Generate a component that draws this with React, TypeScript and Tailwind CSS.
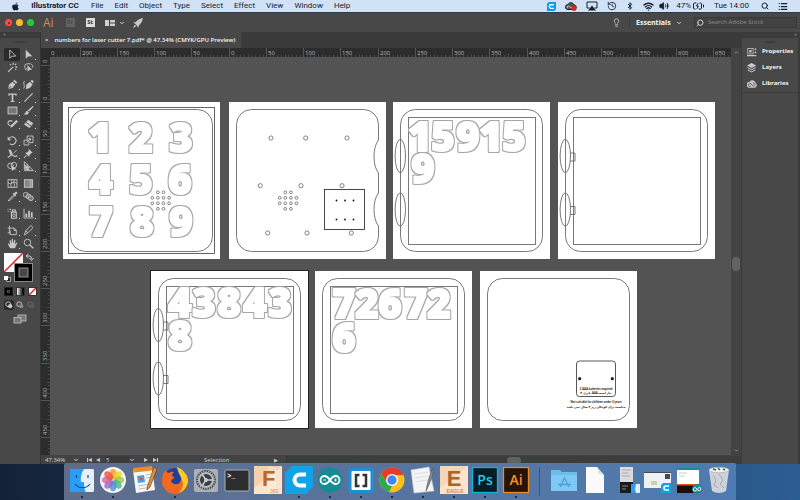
import React from "react";
import {
  Bluetooth,
  ChevronDown,
  History,
  Lightbulb,
  List,
  Search,
  Volume2,
  Wifi,
  Airplay,
  BatteryCharging,
} from "lucide-react";
import { FaApple } from "react-icons/fa";

type Glyph = { char: string; x: number; y: number };
type Point = [number, number];

const LINE = "#6a6a6a";

/* ---------- Artboard parts ---------- */

function Digits({ items }: { items: Glyph[] }) {
  return (
    <g fill="#ffffff" stroke="#ffffff" strokeWidth="2" strokeLinejoin="round" fontFamily="'Open Sans', sans-serif" fontWeight="800" fontSize="40" textAnchor="middle">
      {items.map((g, i) => (
        <text key={i} x={g.x} y={g.y - 1} filter="url(#cut-line)">
          {g.char}
        </text>
      ))}
    </g>
  );
}

/* Hairline contour drawn round a white shape */
function CutLineFilter() {
  return (
    <svg className="absolute h-0 w-0" aria-hidden="true">
      <filter id="cut-line" x="-20%" y="-20%" width="140%" height="140%" colorInterpolationFilters="sRGB">
        <feMorphology in="SourceAlpha" operator="dilate" radius="1" result="fat" />
        <feFlood floodColor="#a6a6a6" />
        <feComposite in2="fat" operator="in" result="edge" />
        <feMerge>
          <feMergeNode in="edge" />
          <feMergeNode in="SourceGraphic" />
        </feMerge>
      </filter>
    </svg>
  );
}

function Holes({ points, r }: { points: Point[]; r: number }) {
  return (
    <g fill="none" stroke="#666666" strokeWidth="0.8">
      {points.map(([x, y], i) => (
        <circle key={i} cx={x} cy={y} r={r} />
      ))}
    </g>
  );
}

function speaker(x0: number): Point[] {
  const xs = [x0, x0 + 5.6, x0 + 11.2, x0 + 16.8];
  return [
    [xs[1], 90.3],
    [xs[2], 90.3],
    ...xs.map((x): Point => [x, 95.8]),
    ...xs.map((x): Point => [x, 101.3]),
    [xs[1], 106.8],
    [xs[2], 106.8],
  ];
}

const Outline = () => <rect x="7.5" y="7.5" width="142" height="142" rx="15" fill="none" stroke={LINE} strokeWidth="0.9" />;
const Inner = () => <rect x="15.5" y="15.5" width="127" height="127" fill="none" stroke={LINE} strokeWidth="0.9" />;

function Hinges({ tabs = false }: { tabs?: boolean }) {
  return (
    <g fill="none" stroke={LINE} strokeWidth="0.9">
      <ellipse cx="7.3" cy="54" rx="5.2" ry="16.7" />
      <ellipse cx="7.3" cy="107.5" rx="5.2" ry="16.7" />
      {tabs && <path d="M12.3 51H17v8h-4.7M12.3 104.500H17v8h-4.700" />}
    </g>
  );
}

function row(chars: string, xs: number[], y: number): Glyph[] {
  return chars.split("").map((char, i) => ({ char, x: xs[i], y }));
}

function Artboard({ place, active, children }: { place: string; active?: boolean; children: React.ReactNode }) {
  return (
    <svg viewBox="0 0 157 157" className={`absolute h-[157px] w-[157px] bg-white ${active ? "outline outline-1 outline-[#222]" : ""} ${place}`}>
      {children}
    </svg>
  );
}

function Artboards() {
  return (
    <>
      <CutLineFilter />
      <Artboard place="left-[13px] top-[45px]">
        <rect x="5.500" y="5.500" width="146" height="146" fill="none" stroke="#555" strokeWidth="0.9" />
        <Outline />
        <Digits items={[...row("123", [37, 78, 118], 51), ...row("456", [38, 78, 117], 93), ...row("789", [38, 79, 118], 135)]} />
        <Holes points={speaker(89.3)} r={1.4} />
      </Artboard>
      <Artboard place="left-[179px] top-[45px]">
        <path
          d="M22.500 7.500h112a15 15 0 0 1 15 15V38c-6 7-6 26 0 33v20c-6 7-6 26 0 33v10.500a15 15 0 0 1-15 15h-112a15 15 0 0 1-15-15v-112a15 15 0 0 1 15-15z"
          fill="none"
          stroke={LINE}
          strokeWidth="0.9"
        />
        <Holes
          r={2.1}
          points={[[42, 36], [76.7, 36], [118, 36], [31.3, 83.7], [72, 83.7], [113, 83.7], [38.7, 131], [78, 131], [122.3, 131]]}
        />
        <Holes points={speaker(50.7)} r={1.4} />
        <rect x="95.500" y="87.500" width="40" height="40" fill="#fff" stroke="#333" strokeWidth="0.9" />
        {[98.5, 117.5].map((y) => [107.5, 116, 124.5].map((x) => <circle key={`${x}-${y}`} cx={x} cy={y} r="0.9" fill="#111" />))}
      </Artboard>
      <Artboard place="left-[343px] top-[45px]">
        <Outline />
        <Inner />
        <Hinges />
        <Digits items={[...row("15915", [27, 50, 75, 98, 121], 50), { char: "9", x: 30, y: 82 }]} />
      </Artboard>
      <Artboard place="left-[508px] top-[45px]">
        <Outline />
        <Inner />
        <Hinges tabs />
      </Artboard>
      <Artboard place="left-[101px] top-[214px]" active>
        <Outline />
        <Inner />
        <Hinges tabs />
        <Digits items={[...row("43843", [29, 53, 78, 104, 129], 47), { char: "8", x: 29, y: 80 }]} />
      </Artboard>
      <Artboard place="left-[265px] top-[214px]">
        <Outline />
        <Inner />
        <Digits items={[...row("72672", [29, 52, 75, 101, 124], 48), { char: "6", x: 29, y: 82 }]} />
      </Artboard>
      <Artboard place="left-[430px] top-[214px]">
        <Outline />
        <rect x="96.500" y="90" width="39" height="35.500" rx="3" fill="none" stroke="#444" strokeWidth="0.9" />
        <circle cx="99.700" cy="107.700" r="1.600" fill="#222" />
        <circle cx="132.300" cy="107.700" r="1.600" fill="#222" />
        <g fill="#111" fontFamily="Lato, 'DejaVu Sans', sans-serif" fontWeight="700" textAnchor="middle" fontSize="3">
          <text x="116" y="118.500">3 AAA batteries required</text>
          <text x="116" y="122.500">۳ باتری AAA نیاز است</text>
          <text x="116" y="132">Not suitable for children under 3 years</text>
          <text x="116" y="137">مناسب برای کودکان زیر ۳ سال نمی باشد</text>
        </g>
      </Artboard>
    </>
  );
}

/* ---------- Rulers ---------- */

const TOP_LABELS = ["250", "200", "150", "100", "50", "0", "50", "100", "150", "200", "250", "300", "350", "400", "450", "500", "550", "600", "650"];
const SIDE_LABELS = ["0", "0", "50", "100", "150", "200", "250", "300", "350", "400", "450"];
const STEP = 37.25;

function TopRuler() {
  return (
    <svg className="h-[9px] min-w-0 flex-1 bg-[#2c2c2c]" fontFamily="'Open Sans', sans-serif" fontSize="6" fill="#b5b5b5" stroke="none">
      {TOP_LABELS.map((t, i) => {
        const x = Math.round(29.5 + (i - 1) * STEP);
        return (
          <g key={i}>
            <rect x={x} y="0" width="1" height="9" fill="#555" />
            {[1, 2, 3, 4, 5, 6, 7, 8, 9].map((n) => (
              <rect key={n} x={Math.round(x + n * 3.725)} y={n === 5 ? 6 : 7} width="1" height="3" fill="#484848" />
            ))}
            <text x={i === 0 ? 1 : x + 2} y="6.500">
              {i === 0 ? "0" : t}
            </text>
          </g>
        );
      })}
    </svg>
  );
}

function SideRuler() {
  return (
    <svg className="h-full w-[9px] shrink-0 bg-[#2c2c2c]" fontFamily="'Open Sans', sans-serif" fontSize="6" fill="#b5b5b5">
      {SIDE_LABELS.map((t, i) => {
        const y = Math.round(7.5 + i * STEP);
        return (
          <g key={i}>
            <rect x="0" y={y} width="9" height="1" fill="#555" />
            {[1, 2, 3, 4, 5, 6, 7, 8, 9].map((n) => (
              <rect key={n} x={n === 5 ? 6 : 7} y={Math.round(y + n * 3.725)} width="3" height="1" fill="#484848" />
            ))}
            <text transform={`translate(6 ${y - 2}) rotate(-90)`}>{t}</text>
          </g>
        );
      })}
    </svg>
  );
}

/* ---------- Tool icons, each on a 16 unit grid ---------- */

const F = { fill: "#c8c8c8", stroke: "none" };
const TOOL_GROUPS: [string, React.ReactNode][][] = [
  [
    ["Selection", <path d="M4 1.500v12l3.200-3 5.500-.2z" />],
    ["Direct selection", <path {...F} d="M4 1v13l3.500-3.200 6-.3z" />],
    ["Magic wand", <path d="M1.500 14.500 9 7M9 1v3M13.500 2.500l-2 2M12 7.500h3M4.500 3l1.500 1.500M13.500 11.500l-1.500-1.500" strokeWidth="1.600" />],
    ["Lasso", <><path d="M5 9.500C1 9 1 3 7 2.500s9 3 6 6M5 9.500c-2 0-2 2.500 0 2.500" /><path {...F} d="M6.500 4.500V14l2.500-2.500h4z" /></>],
  ],
  [
    ["Pen", <><path {...F} d="M1.500 15 3 8l5-4 4 4-4 5zM9 3l2-2 4 4-2 2z" /><path d="m2 14.500 4-4" stroke="#444" /></>],
    ["Curvature", <><path {...F} d="M4 15l1-7 5-4 4 4-4 5zM11 3l2-2 3 3-2 2z" /><path d="M1 14C4 9-1 7 2 3" /></>],
    ["Type", <path {...F} d="M2 2h12v3.500h-1.500L12 4H9.200v9l1.800.5V14.500H5v-1l1.800-.5V4H4l-.5 1.500H2z" />],
    ["Line segment", <path d="M2 14 14 2" strokeWidth="1.500" />],
    ["Rectangle", <rect x="1.500" y="3" width="13" height="10" fill="#777" />],
    ["Paintbrush", <path {...F} d="M14.500 1 7 7.500l2 2L15.500 2zM6.500 8.500c-3 0-2 4-5.500 5 4 1.500 7.500 0 7.500-3z" />],
    ["Shaper", <><path d="M8 5C4 2 0 6 2 9s5 3 6 0" strokeWidth="1.500" /><path {...F} d="M13.500 3 6 10.500 5 14l3.500-1.500L16 5z" /></>],
    ["Eraser", <><path {...F} d="m1.500 9.500 6-7L15 7.500 9.500 14.500z" /><path d="m4.500 6.500 7 5" stroke="#444" /></>],
  ],
  [
    ["Rotate", <><path d="M3.500 4.500A5.500 5.500 0 1 1 4 12.500" strokeWidth="1.500" /><path {...F} d="M1 2v5.500h5z" /></>],
    ["Scale", <><path d="M1.500 7.500h7v7h-7zM6 7V1.500h8.500V11H9" /><path d="m5 11 6-6M8 5h3v3" /></>],
    ["Width", <><path d="M1 13c4 1 3-4 6-3s4 4 8 1" strokeWidth="1.800" /><path {...F} d="M2 2l4 1 2 6-3 1z" /><path d="m9 8 5-5" /></>],
    ["Free transform", <><path {...F} d="m8 1 6 6-2 .5L9.500 10l-.5 3L3 7l3-.5L8.500 4z" /><path d="M5 10.500 1.500 14.500" strokeWidth="1.500" /></>],
    ["Shape builder", <><circle cx="5" cy="7" r="4" /><circle cx="10" cy="6" r="4" /><path {...F} d="M7 7v8l2.500-2.500H14z" /></>],
    ["Perspective grid", <><path d="M2 1v13h13zM2 5l8 9M2 9h8M6 4v10" /><path {...F} d="M3 6l6 2v5H3z" opacity=".7" /></>],
  ],
  [
    ["Mesh", <><rect x="1.500" y="2.500" width="13" height="11" /><path d="M1.500 7c5 4 7-4 13 1M6 2.500c4 4-3 7 1 11M11 2.500c-3 4 2 7-1 11" /></>],
    ["Gradient", <><rect x="2" y="2.500" width="12" height="11" fill="#888" /><path {...F} d="M9 3h5v10H9z" opacity=".4" /></>],
    ["Eyedropper", <><path d="M10 5.500 3.500 12l-1.500 2.500 2.500-1L11 7" /><path {...F} d="m8 4 1.500-1 1 .5C12 .5 15 .500 15 2.500c0 1-1.500 2-2.500 3l.5 1.500-1 1z" /></>],
    ["Blend", <><rect x="1" y="2.500" width="6" height="6" rx="1" /><circle cx="8" cy="8" r="3.500" fill="#888" /><circle cx="11.500" cy="10.500" r="3.500" fill="#777" /></>],
  ],
  [
    ["Symbol sprayer", <><path d="M6.500 6h7v9h-7zM8 6V3h4v3M1 2h1M4 2h2M1 5h1M4 5h1" strokeWidth="1.600" /><circle cx="10" cy="10.500" r="2" /></>],
    ["Column graph", <><path d="M1.500 1v13.500h14" /><path {...F} d="M3.500 8H6v5H3.500zM7.500 4H10v9H7.500zM11.500 6H14v7h-2.500z" /></>],
  ],
  [
    ["Artboard", <path d="M3.500 1v10.500M1 4.500h9.500l3 3v6.500h-9V8M1 11.500h4M10.500 4.500V8h3" />],
    ["Slice", <path d="m2 14.500 2-6 6-6.500c3-2 5 1 3 3.500l-6 6zM4 8.500l3 3" />],
    ["Hand", <path {...F} d="M4.500 15 1 8.500l1.300-.8L4.500 10 3.500 3.500 5 3l1.500 5L7 1h1.600l.4 7 1.800-5.500 1.500.4-.8 6.600 2.200-3 1.300.7L11.500 15z" />],
    ["Zoom", <><circle cx="6.500" cy="6.500" r="4.700" /><path d="m10 10 5 5" strokeWidth="2" /></>],
  ],
];

function ToolButton({ name, icon }: { name: string; icon: React.ReactNode }) {
  const active = name === "Selection";
  return (
    <button type="button" aria-label={name} title={name} className={`relative flex h-[13px] w-4 items-center justify-center rounded-xs ${active ? "bg-[#2b2b2b]" : ""}`}>
      <svg viewBox="0 0 16 16" className="h-[11px] w-[11px]" fill="none" stroke="#c8c8c8" strokeWidth="1.300">
        {icon}
      </svg>
      {!["Selection", "Magic wand", "Lasso", "Mesh", "Gradient", "Zoom", "Curvature"].includes(name) && (
        <span className="absolute right-0 bottom-px h-px w-px bg-neutral-300" />
      )}
    </button>
  );
}

function ToolPanel() {
  return (
    <aside className="flex w-10 shrink-0 flex-col bg-[#484848]">
      <div className="h-[6px] bg-[#3a3a3a] pl-[3px] text-[6px] leading-[5px] text-neutral-400">«</div>
      <div className="mx-auto mt-[3px] h-[2px] w-[10px] bg-[#3c3c3c]" />
      <div className="mt-[5px] flex flex-col gap-1 pl-1">
        {TOOL_GROUPS.map((g, i) => (
          <div key={i} className="grid w-8 grid-cols-2">
            {g.map(([name, icon]) => (
              <ToolButton key={name} name={name} icon={icon} />
            ))}
          </div>
        ))}
      </div>
      <svg viewBox="0 0 32 32" className="mt-[3px] ml-1 h-8 w-8" aria-label="Fill and stroke">
        <rect x="0" y="0" width="19" height="19" fill="#fff" />
        <path d="M0 19 19 0" stroke="#e3242b" strokeWidth="1.500" />
        <rect x="10.500" y="10.500" width="18" height="18" fill="#000" stroke="#888" />
        <rect x="15" y="15" width="9" height="9" fill="#484848" stroke="#aaa" strokeWidth="0.800" />
        <path d="M23 3h2.500q2 0 2 3M24.500 1 22 3l2.500 2M25.500 5l2 2.500 2-2.500" fill="none" stroke="#c8c8c8" />
        <path d="M2.500 24.500h4v4h-4z" fill="#222" stroke="#bbb" strokeWidth=".8" />
        <path d="M0 23h4v4H0z" fill="#fff" />
      </svg>
      <div className="mt-[2px] flex gap-[3px] pl-1">
        <button type="button" aria-label="Color" className="flex h-[9px] w-[9px] items-center justify-center border border-[#222] bg-black">
          <span className="h-[3px] w-[3px] border border-neutral-600" />
        </button>
        <button type="button" aria-label="Gradient fill" className="h-[9px] w-[9px] border border-[#333] bg-linear-to-r from-white to-black" />
        <button type="button" aria-label="No fill" className="h-[9px] w-[9px] border border-[#333] bg-white">
          <svg viewBox="0 0 7 7" className="h-[7px] w-[7px]">
            <path d="M0 7 7 0" stroke="#e3242b" strokeWidth="1.500" />
          </svg>
        </button>
      </div>
      <div className="mt-1 flex gap-px pl-1">
        {["Draw normal", "Draw behind", "Draw inside"].map((n, i) => (
          <button key={n} type="button" aria-label={n} className={`flex h-[10px] w-[10px] items-center justify-center rounded-xs ${i === 0 ? "bg-[#2b2b2b]" : ""} ${i === 2 ? "opacity-30" : ""}`}>
            <svg viewBox="0 0 10 10" className="h-2 w-2">
              <circle cx="4" cy="4" r="3" fill="none" stroke="#c8c8c8" strokeWidth="1.200" />
              <circle cx="6.500" cy="6.500" r="2.700" fill={i === 0 ? "#c8c8c8" : "#888"} />
            </svg>
          </button>
        ))}
      </div>
      <button type="button" aria-label="Screen mode" className="mt-1 ml-[13px] h-[10px] w-[14px]">
        <svg viewBox="0 0 14 10" className="h-[10px] w-[14px]" fill="#777" stroke="#bbb" strokeWidth=".9">
          <rect x="5" y="1" width="8" height="6" />
          <rect x="1" y="3.500" width="7" height="5.500" />
        </svg>
      </button>
    </aside>
  );
}

/* ---------- Bars ---------- */

function MenuBar() {
  return (
    <header className="flex h-[13px] shrink-0 items-center border-b border-[#2d3a4e] bg-[#d2e2f6] font-['Roboto',sans-serif] text-[8px] leading-[12px] text-[#16202e]">
      <FaApple className="mr-[10px] ml-[11px] h-[9px] w-[9px]" />
      <nav className="flex gap-[11px]">
        <button type="button" className="w-[50px] whitespace-nowrap font-bold">Illustrator CC</button>
        {["File", "Edit", "Object", "Type", "Select", "Effect", "View", "Window", "Help"].map((m) => (
          <button type="button" key={m}>{m}</button>
        ))}
      </nav>
      <div className="ml-auto flex items-center gap-[9px] pr-3">
        <svg viewBox="0 0 10 10" className="h-[9px] w-[9px]">
          <path d="M2 0h8v8L8 10H0V2z" fill="#0b9be8" />
          <path d="M7.500 3H4.500a2 2 0 0 0 0 4h3" fill="none" stroke="#fff" strokeWidth="1.500" />
        </svg>
        <svg viewBox="0 0 12 9" className="h-[9px] w-3">
          <path d="M3 7.500a2.500 2.500 0 0 1 0-5c1-2.500 5-2.500 6 .5 3 0 3 4.500 0 4.500z" fill="#555" stroke="#222" />
          <path d="M3 6a1 1 0 0 1 0-2c2 0 2 2 4 2" fill="none" stroke="#ddd" strokeWidth=".8" />
          <circle cx="9" cy="6.500" r="2.500" fill="#e2231a" />
        </svg>
        <svg viewBox="0 0 12 10" className="h-[10px] w-3">
          <path d="M3.500 7H1V1h10v6H8.500" fill="none" stroke="#16202e" />
          <path d="m6 4.500 4 5H2z" fill="#16202e" />
        </svg>
        <History className="h-[10px] w-[10px]" />
        <Bluetooth className="h-[10px] w-2" strokeWidth={3} />
        <Wifi className="h-[11px] w-[11px]" strokeWidth={3} />
        <Volume2 className="-ml-1 h-[10px] w-[10px]" fill="#16202e" />
        <div className="-ml-[2px] flex items-center gap-px">
          <span>47%</span>
          <BatteryCharging className="h-3 w-[13px]" />
        </div>
        <span className="whitespace-nowrap">Tue 14:00</span>
        <Search className="ml-[3px] h-2 w-2" strokeWidth={3} />
        <List className="h-[11px] w-[10px]" strokeWidth={3} />
      </div>
    </header>
  );
}

function AppBar() {
  return (
    <div className="flex h-[19px] shrink-0 items-center bg-[#484848] pr-[3px] pl-[5px]">
      <div className="flex gap-1">
        <button type="button" aria-label="Close" className="flex h-[7px] w-[7px] items-center justify-center rounded-full bg-[#fc4b48]">
          <span className="h-[2px] w-[2px] rounded-full bg-[#7a1010]" />
        </button>
        <button type="button" aria-label="Minimise" className="h-[7px] w-[7px] rounded-full bg-[#fdbc2e]" />
        <button type="button" aria-label="Full screen" className="h-[7px] w-[7px] rounded-full bg-[#28c840]" />
      </div>
      <span className="ml-[9px] text-[12px] leading-4 text-[#c98a5e]">Ai</span>
      <button type="button" className="ml-3 h-[9px] w-[9px] bg-[#636363] text-[6px] leading-[9px] text-[#444]">Br</button>
      <button type="button" className="ml-[11px] h-[9px] w-[9px] bg-[#dcdcdc] text-[6px] leading-[9px] font-bold text-[#333]">St</button>
      <button type="button" aria-label="Arrange documents" className="ml-[10px] flex items-center gap-1">
        <svg viewBox="0 0 10 8" className="h-2 w-[10px]" fill="#d0d0d0">
          <path d="M0 1h4v6H0zM5 1h5v2.500H5zM5 4.500h5V7H5z" />
        </svg>
        <ChevronDown className="h-[6px] w-[6px] text-neutral-300" strokeWidth={4} />
      </button>
      <button type="button" aria-label="GPU performance" className="ml-2">
        <svg viewBox="0 0 12 12" className="h-[10px] w-[10px]" fill="#c8c8c8">
          <path d="M12 0C7 1 5 3 3 5L0 5.500 2.500 7 5 9.500 6.500 12 7 9c2-2 4-4 5-9zM2 8l-2 4 4-2z" />
        </svg>
      </button>
      <Lightbulb className="ml-auto h-[9px] w-[9px] text-neutral-300" />
      <div className="ml-2 flex items-center border-l border-[#3d3d3d] pl-[6px]">
        <select aria-label="Workspace" className="w-10 appearance-none bg-transparent text-[7px] leading-3 font-bold text-neutral-100">
          <option>Essentials</option>
        </select>
        <ChevronDown className="h-[6px] w-[6px] text-neutral-300" strokeWidth={4} />
      </div>
      <div className="ml-3 flex h-[11px] w-[103px] items-center border border-[#393939] bg-[#424242] pl-px">
        <Search className="h-2 w-2 -scale-x-100 text-neutral-300" strokeWidth={3} />
        <input aria-label="Search Adobe Stock" placeholder="Search Adobe Stock" className="ml-1 w-[84px] min-w-0 bg-transparent text-[6px] leading-[9px] text-neutral-300 placeholder:text-[#8c8c8c]" />
      </div>
    </div>
  );
}

function RightPanel() {
  const items: [string, React.ReactNode][] = [
    ["Properties", <><rect x="1" y="2" width="7" height="7" fill="none" stroke="#c8c8c8" /><path d="M3 4h3v3H3zM10 2h2v2h-2zM10 6h2v2h-2zM0 10.500h12V12H0z" /></>],
    ["Layers", <path d="m6 0 6 3.200-6 3.200L0 3.200zM1.500 5.500 6 8l4.500-2.500L12 6.300 6 9.500 0 6.300zM1.500 8.500 6 11l4.500-2.500.8 1L6 12.500.700 9.500z" />],
    ["Libraries", <><path d="M3.500 11.500a4 4 0 0 1 0-8c2-3 7-2 7.500 1.500a3.500 3.500 0 0 1-1 6.500z" /><path d="M5 9a2 2 0 1 1 0-3l2.500 3a2 2 0 1 0 0-3.500" fill="none" stroke="#444" /></>],
  ];
  return (
    <aside className="flex w-[59px] shrink-0 flex-col border-r-2 border-l border-[#3a3a3a] bg-[#484848]">
      <div className="h-[6px] bg-[#3a3a3a] pr-px text-right text-[6px] leading-[5px] text-neutral-400">«</div>
      <div className="mx-auto mt-[3px] h-[2px] w-[10px] bg-[#3c3c3c]" />
      <div className="flex flex-col gap-[3px] border-b border-[#3a3a3a] py-[2px] pl-[5px]">
        {items.map(([name, icon]) => (
          <button key={name} type="button" className="flex h-[13px] items-center gap-[5px] text-[6px] font-bold text-neutral-100">
            <svg viewBox="0 0 13 13" className="h-[10px] w-[10px] shrink-0" fill="#c8c8c8">{icon}</svg>
            {name}
          </button>
        ))}
      </div>
    </aside>
  );
}

function Document() {
  return (
    <main className="flex min-w-0 flex-1 flex-col border-l border-[#333] bg-[#3a3a3a]">
      <div className="flex h-4 shrink-0">
        <div className="flex h-full w-[200px] items-center gap-[6px] bg-[#484848] pl-1 text-[6px] text-neutral-100">
          <button type="button" aria-label="Close document">×</button>
          <span className="font-semibold whitespace-nowrap">numbers for laser cutter 7.pdf* @ 47.34% (CMYK/GPU Preview)</span>
        </div>
      </div>
      <div className="flex min-h-0 flex-1">
        <div className="flex min-w-0 flex-1 flex-col">
          <div className="flex shrink-0">
            <div className="h-[9px] w-[9px] bg-[#2c2c2c]" />
            <TopRuler />
          </div>
          <div className="flex min-h-0 flex-1">
            <SideRuler />
            <div className="relative min-w-0 flex-1 overflow-hidden bg-[#535353]">
              <Artboards />
            </div>
          </div>
        </div>
        <div className="flex w-[10px] shrink-0 flex-col items-center bg-[#434343] py-[2px]">
          <ChevronDown className="h-[5px] w-[5px] rotate-180 text-neutral-400" strokeWidth={4} />
          <div className="h-1/2" />
          <div className="h-[14px] w-2 rounded-full bg-[#626262]" />
          <div className="flex-1" />
          <ChevronDown className="h-[5px] w-[5px] text-neutral-400" strokeWidth={4} />
        </div>
      </div>
      <div className="flex h-[9px] shrink-0 items-center bg-[#434343] pt-px text-[6px] leading-[8px] text-neutral-300">
        <select aria-label="Zoom level" className="ml-1 w-[28px] appearance-none leading-[8px]">
          <option>47.34%</option>
        </select>
        <ChevronDown className="h-[6px] w-[6px]" strokeWidth={4} />
        <svg viewBox="0 0 14 6" className="ml-2 h-[6px] w-[14px]" fill="#c8c8c8"><path d="M0 1h1v4H0zM5 1v4L1 3zM13 1v4L9 3z" /></svg>
        <select aria-label="Artboard" className="ml-1 w-6 appearance-none bg-[#3a3a3a] pl-px leading-[8px]" defaultValue="5">
          <option>5</option>
        </select>
        <ChevronDown className="h-[6px] w-[6px]" strokeWidth={4} />
        <svg viewBox="0 0 14 6" className="ml-[9px] h-[6px] w-[14px]" fill="#c8c8c8"><path d="M0 1v4l4-2zM9 1v4l4-2zM13 1h1v4h-1z" /></svg>
        <span className="ml-[46px] w-[70px]">Selection</span>
        <span className="text-[5px]">▶</span>
        <div className="ml-2 flex h-full flex-1 items-center justify-center border-l border-[#333] bg-[#3d3d3d]">
          <div className="h-[7px] w-[14px] rounded-full bg-[#626262]" />
        </div>
      </div>
    </main>
  );
}

/* ---------- Dock ---------- */

const APPS: { name: string; running: boolean; icon: React.ReactNode }[] = [
  {
    name: "Finder", running: true,
    icon: <><rect x="2" y="3" width="24" height="23" rx="1.500" fill="#e4f0fb" /><path d="M2 3h14c-3 4-3.500 9-3 13h3c0 4 .5 7 1.500 10H2z" fill="#2b9df4" /><path d="M7 18c4 5 11 5 15 0M8.500 9v3M20 9v3" fill="none" stroke="#164a7a" strokeWidth="1.200" /></>,
  },
  {
    name: "Photos", running: true,
    icon: <><circle cx="14" cy="14" r="13" fill="#f5f5f5" />{["#f79a1e", "#f5cf22", "#9ccb3c", "#45b98c", "#4a90d9", "#9169c4", "#d763a5", "#ee4f45"].map((c, i) => <ellipse key={c} cx="14" cy="8" rx="3.600" ry="5.300" fill={c} opacity=".8" transform={`rotate(${i * 45} 14 14)`} />)}</>,
  },
  {
    name: "Pages", running: false,
    icon: <><path d="m3 4 19-2 3 22-19 3z" fill="#f6f6f4" /><path d="m3 2 19-2 .7 4.500L3.500 6.500z" fill="#f08a24" /><path d="m7 10 7-1 1 7-7 1z" fill="#4aa3e0" /><path d="m9 12 3-1 1 2-2 2z" fill="#e4572e" /><path d="m16 9 5-1M16 12l5-1M8 20l12-2M9 23l10-1.500" stroke="#bbb" /><path d="M24 1 27 3 20 21l-3 3 .5-4z" fill="#e39132" stroke="#5b371a" strokeWidth=".6" /></>,
  },
  {
    name: "Firefox", running: true,
    icon: <><circle cx="14" cy="14" r="12" fill="#21409a" /><path d="M2 8c1-2 2-3 3-4 0 2 1 3 3 3 2-2 4-1 5-1-2 2-3 4 0 5 1 1-2 2-3 4 2 5 9 4 10-1 1-4-2-8-4-12 5 2 11 7 11 13a13 13 0 0 1-26 0c0-3 1-5 1-7z" fill="#f5681f" /><path d="M16 1c7 3 11 8 11 14-1 7-5 10-9 12 4-5 5-9 3-13-1-4-4-7-5-13z" fill="#ffc928" /></>,
  },
  {
    name: "System Preferences", running: false,
    icon: <><rect x="2" y="3" width="24" height="23" rx="2" fill="#aab0b6" /><circle cx="14" cy="14" r="10" fill="#3b3f44" /><circle cx="14" cy="14" r="7" fill="none" stroke="#b9bdc2" strokeWidth="2" /><circle cx="14" cy="14" r="8.800" fill="none" stroke="#b9bdc2" strokeWidth="1.500" strokeDasharray="1.200 1.200" /><path d="M14 14h7M14 14l-4-6M14 14l-4 6" stroke="#c9cdd1" strokeWidth="1.500" /><circle cx="14" cy="14" r="2" fill="#c9cdd1" /></>,
  },
  {
    name: "Terminal", running: false,
    icon: <><rect x="2" y="4" width="24" height="21" rx="1" fill="#2c2d2f" stroke="#a9adb3" /><text x="4" y="11.500" fontSize="7" fontWeight="700" fill="#fff" fontFamily="'Liberation Mono', monospace">&gt;_</text></>,
  },
  {
    name: "Fusion 360", running: false,
    icon: <><rect x="0" y="0" width="28" height="28" fill="#fbe3cc" /><path d="M0 0h28L0 22z" fill="#f3c296" opacity=".6" /><path d="M14 1h8v26h-8z" fill="#fff" opacity=".25" /><text x="8" y="20" fontSize="22" fontWeight="700" fill="#b8692a" fontFamily="'Liberation Sans', sans-serif">F</text><text x="16" y="26.500" fontSize="5" fill="#d4893f" fontFamily="'Liberation Sans', sans-serif">360</text></>,
  },
  {
    name: "Cura", running: true,
    icon: <><path d="M7 0h21v21l-7 7H0V7z" fill="#10a3e8" /><path d="M21 8.500h-6a5.500 5.500 0 0 0 0 11h6" fill="none" stroke="#fff" strokeWidth="4" /></>,
  },
  {
    name: "Arduino", running: true,
    icon: <><circle cx="14" cy="14" r="12.500" fill="#138c93" /><path d="M14 14c-2-3-3.500-4-5.500-4a4 4 0 0 0 0 8c2 0 3.500-1 5.500-4s3.500-4 5.500-4a4 4 0 0 1 0 8c-2 0-3.500-1-5.500-4z" fill="none" stroke="#fff" strokeWidth="1.800" /><path d="M7 14h3M18 14h3M19.500 12.500v3" stroke="#fff" strokeWidth=".9" /></>,
  },
  {
    name: "Brackets", running: true,
    icon: <><rect x="1.500" y="2" width="25" height="25" rx="3" fill="#1c8fd6" /><rect x="4.500" y="5" width="19" height="19" rx="1" fill="#fff" /><path d="M12.500 9H9v11h3.500M15.500 9H19v11h-3.500" fill="none" stroke="#333" strokeWidth="2.500" /></>,
  },
  {
    name: "Chrome", running: true,
    icon: <><circle cx="14" cy="14" r="12.500" fill="#fbc116" /><path d="M3.200 7.700A12.500 12.500 0 0 1 25.500 9H14l-5 8z" fill="#e33b2e" /><path d="M3.200 7.700 9 17.500l5 2.500-3 6.100A12.500 12.500 0 0 1 3.200 7.700z" fill="#2da94f" /><circle cx="14" cy="14" r="6" fill="#fff" /><circle cx="14" cy="14" r="4.700" fill="#4285f4" /></>,
  },
  {
    name: "TextEdit", running: true,
    icon: <><path d="m2 4 18-3 5 24-20 2z" fill="#f3f4f5" stroke="#c6cad0" strokeWidth=".6" /><path d="m5 8 14-2M6 12l13-2M6 16l13-2" stroke="#dcdfe3" /><path d="M24 2c1 6-3 15-7 23 1-8 4-17 7-23z" fill="#868c95" stroke="#555" strokeWidth=".6" /></>,
  },
  {
    name: "Eagle", running: true,
    icon: <><rect x="0" y="0" width="28" height="28" fill="#fbe3cc" /><path d="M0 0h28L0 22z" fill="#f5cda8" opacity=".6" /><text x="14" y="20" textAnchor="middle" fontSize="22" fontWeight="700" fill="#a9642c" fontFamily="'Liberation Sans', sans-serif">E</text><text x="15" y="26.500" textAnchor="middle" fontSize="5" fontWeight="700" fill="#d4893f" fontFamily="'Liberation Sans', sans-serif">EAGLE</text></>,
  },
  {
    name: "Photoshop", running: true,
    icon: <><rect x="1.500" y="1.500" width="25" height="25" fill="#061e26" stroke="#14b5cf" strokeWidth="1.300" /><text x="14" y="19" textAnchor="middle" fontSize="14" fontWeight="600" fill="#2bc8e8" fontFamily="'Open Sans', sans-serif">Ps</text></>,
  },
  {
    name: "Illustrator", running: true,
    icon: <><rect x="1.500" y="1.500" width="25" height="25" fill="#271406" stroke="#ee8a1d" strokeWidth="1.300" /><text x="14" y="19" textAnchor="middle" fontSize="14" fontWeight="600" fill="#f7931e" fontFamily="'Open Sans', sans-serif">Ai</text></>,
  },
];

const SHELF: { name: string; icon: React.ReactNode }[] = [
  { name: "Applications", icon: <><path d="M1 4h9l2 2h15v19H1z" fill="#6bbdf0" /><path d="M1 9h26v16H1z" fill="#7fc9f5" /><path d="m10 21 4.500-9 4.500 9M8 18.500h13" fill="none" stroke="#4e9fd4" strokeWidth="1.300" /></> },
  { name: "Document", icon: <><path d="M5 1h11l7 8v18H5z" fill="#fafafa" /><path d="M16 1c2 3 1 5 1 7 2 0 4 0 6 2z" fill="#dde0e4" /></> },
  { name: "Finder window", icon: <><path d="M8 1h13v15H8z" fill="#d9dbde" /><path d="M10 4h9M10 7h6M10 10h8" stroke="#aaa" /><path d="M8 16h13v11H8z" fill="#191a1c" /><path d="M10 20h6M10 23h4" stroke="#888" /><path d="M19 18h9v9h-9z" fill="#dfeefb" /><path d="M19 18h5l-1 5 1 4h-5z" fill="#2b9df4" /></> },
  { name: "Cura window", icon: <><path d="M1 7h27v15H1z" fill="#f0f1f2" /><path d="M1 6h27v1H1zM22 8h5v5h-5z" fill="#454a52" /><path d="M8 15h6v4H8z" fill="#cfd0b0" /><path d="M20 17h8v10H18v-8z" fill="#10a3e8" /><path d="M26 20h-3a2 2 0 0 0 0 4h3" fill="none" stroke="#fff" strokeWidth="1.600" /></> },
  { name: "Arduino window", icon: <><path d="M3 2h22v25H3z" fill="#fff" /><path d="M3 2h22v2H3z" fill="#138c93" /><path d="M5 7h8M5 10h6" stroke="#ccc" /><path d="M3 19h22v8H3z" fill="#1a0f0c" /><path d="M3 18h22v1.500H3z" fill="#e0552a" /><circle cx="23" cy="23" r="5" fill="#138c93" /><path d="M23 23c-3-4-5 2-2.500 2S23 23 25 21.500s2.500 4 0 3S23 23 23 23z" fill="none" stroke="#fff" /></> },
  { name: "Trash", icon: <><path d="M4 4h20l-3 21q-7 4-14 0z" fill="#d5d8dc" opacity=".95" /><ellipse cx="14" cy="4" rx="10" ry="2.800" fill="#f0f1f2" stroke="#a9adb3" strokeWidth=".7" /><path d="M8 3l3 1M13 2l2 2M18 3l2 1" stroke="#47604f" strokeWidth="1.500" /><path d="m8 9 3 5-2 5 4 3M14 8l4 6-3 4 4 4" fill="none" stroke="#a7abb0" /></> },
];

function Dock() {
  return (
    <div className="absolute bottom-0 left-1/2 flex h-[37px] w-[672px] -translate-x-1/2 rounded-t-xs bg-linear-to-r from-[#5e6d8b] to-[#4e7bb2] pl-[2px]">
      {APPS.map((a) => (
        <button key={a.name} type="button" aria-label={a.name} className="flex w-[31px] flex-col items-center pt-[3px]">
          <svg viewBox="0 0 28 28" className="h-7 w-7">{a.icon}</svg>
          {a.running && <span className="mt-[2px] h-[2px] w-[2px] rounded-full bg-[#0c1220]" />}
        </button>
      ))}
      <div className="mx-2 my-1 w-px bg-[#3d5375]" />
      {SHELF.map((a) => (
        <button key={a.name} type="button" aria-label={a.name} className="flex w-[31px] flex-col items-center pt-[3px]">
          <svg viewBox="0 0 28 28" className="h-7 w-7">{a.icon}</svg>
        </button>
      ))}
    </div>
  );
}

export default function App() {
  return (
    <div className="relative flex h-screen w-full flex-col overflow-hidden bg-linear-to-r from-[#142238] to-[#2c5d91] font-['Open_Sans',sans-serif]">
      <MenuBar />
      <AppBar />
      <div className="mb-9 flex min-h-0 flex-1">
        <ToolPanel />
        <Document />
        <RightPanel />
      </div>
      <Dock />
    </div>
  );
}
